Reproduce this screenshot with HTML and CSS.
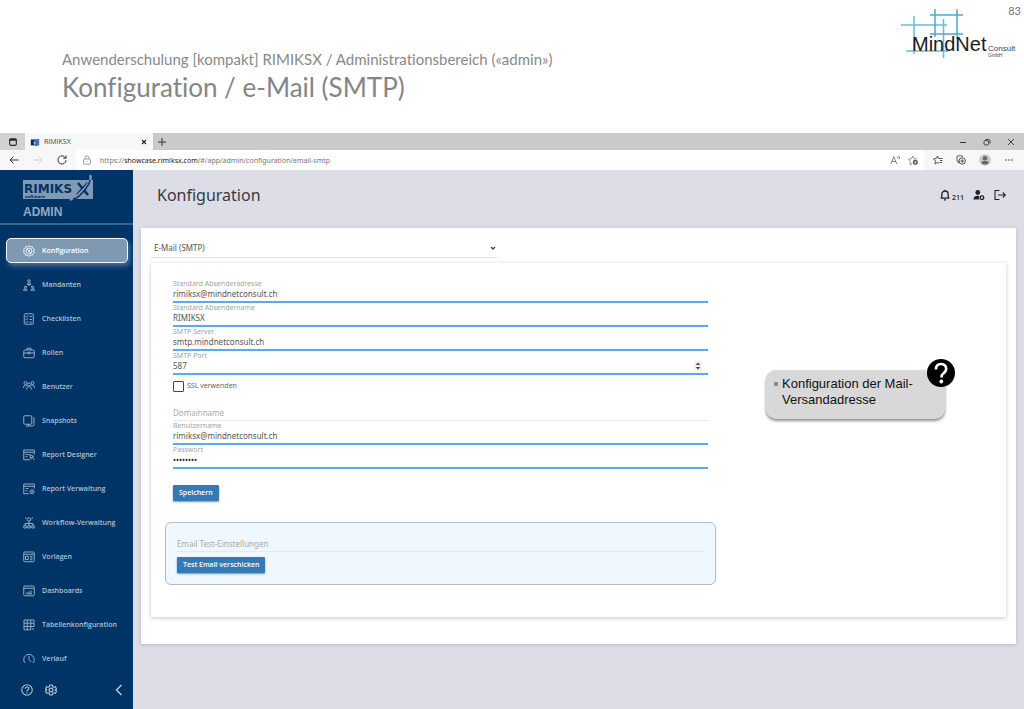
FILE: index.html
```
<!DOCTYPE html>
<html lang="de">
<head>
<meta charset="utf-8">
<meta name="viewport" content="width=device-width, initial-scale=1">
<title>Konfiguration / e-Mail (SMTP)</title>
<link rel="stylesheet" href="styles.css">
</head>
<body>
<header class="slide-head">
  <div class="slide-titles">
    <p class="slide-sub">Anwenderschulung [kompakt] RIMIKSX / Administrationsbereich («admin»)</p>
    <h1 class="slide-title">Konfiguration / e-Mail (SMTP)</h1>
  </div>
  <svg class="mindnet" viewBox="0 0 118 52" role="img" aria-label="MindNet Consult GmbH">
    <g stroke="#62bde4" stroke-width="1.5" fill="none">
      <path d="M1 18H47M6 44H48M14 9V47M43.500 12V51"/>
      <path stroke="#4da9cc" d="M30 8H63M30 27H63M35 2V30M57 2V32"/>
    </g>
    <text x="12" y="44" class="mn-name">MindNet</text>
    <text x="88" y="44" class="mn-consult">Consult</text>
    <text x="88" y="50" class="mn-gmbh">GmbH</text>
  </svg>
  <span class="page-no">83</span>
</header>

<section class="browser">
  <div class="tabbar">
    <button class="tab-menu" aria-label="Tabaktionen"><svg class="i10" viewBox="0 0 12 12"><rect x="2" y="2" width="8" height="8" rx="1.500" fill="none" stroke="#222" stroke-width="1.300"/><path d="M2 3.500h8" stroke="#222" stroke-width="2"/></svg></button>
    <div class="tab">
      <svg class="i10" viewBox="0 0 12 12"><rect x="1" y="3" width="6" height="7" fill="#16243f"/><path d="M5 3l6-1v8l-5 1z" fill="#3c6fd0"/><path d="M4 5l3 2-2 3z" fill="#a9c4ee"/></svg>
      <span class="tab-name">RIMIKSX</span>
      <button class="bare" aria-label="Tab schließen"><svg class="i8" viewBox="0 0 8 8"><path d="M2 2l4 4M6 2l-4 4" stroke="#222" stroke-width="1.100"/></svg></button>
    </div>
    <button class="bare new-tab" aria-label="Neuer Tab"><svg class="i10" viewBox="0 0 10 10"><path d="M5 1v8M1 5h8" stroke="#333"/></svg></button>
    <div class="window-btns">
      <button class="bare" aria-label="Minimieren"><svg class="i8" viewBox="0 0 8 8"><path d="M1 4.500h6" stroke="#333"/></svg></button>
      <button class="bare" aria-label="Wiederherstellen"><svg class="i8" viewBox="0 0 8 8"><path d="M2.500 1.500h3q1.500 0 1.500 1.500v2.500" fill="none" stroke="#333" stroke-width=".9"/><rect x="1" y="2.500" width="4.500" height="4.500" rx="1.500" fill="none" stroke="#333" stroke-width=".9"/></svg></button>
      <button class="bare" aria-label="Schließen"><svg class="i8" viewBox="0 0 8 8"><path d="M1 1l6 6M7 1l-6 6" stroke="#333" stroke-width=".9"/></svg></button>
    </div>
  </div>
  <div class="toolbar">
    <div class="nav-btns">
      <button class="bare" aria-label="Zurück"><svg class="i10" viewBox="0 0 10 10"><path d="M9.500 5H1M4.500 1.500L1 5l3.500 3.500" fill="none" stroke="#333"/></svg></button>
      <button class="bare" aria-label="Vorwärts"><svg class="i10" viewBox="0 0 10 10"><path d="M.5 5H9M5.500 1.500L9 5 5.500 8.500" fill="none" stroke="#d2d2d2"/></svg></button>
      <button class="bare" aria-label="Neu laden"><svg class="i10" viewBox="0 0 10 10"><path d="M8.600 3A4.100 4.100 0 1 0 9.100 5.200M9 .6V3.300H6.300" fill="none" stroke="#333"/></svg></button>
    </div>
    <div class="address">
      <svg class="i10" viewBox="0 0 10 10" fill="none" stroke="#888" stroke-width=".8"><rect x="1.500" y="4" width="7" height="5.200" rx="1"/><path d="M3.200 4V2.600a1.800 1.800 0 0 1 3.600 0V4M5 6v1"/></svg>
      <span class="url">https://<b>showcase.rimiksx.com</b>/#/app/admin/configuration/email-smtp</span>
      <svg class="i10" viewBox="0 0 10 10" fill="none" stroke="#666" stroke-width=".8"><path d="M.8 9L3.800 1.500 6.800 9M1.800 6.500h4M7 1.500q1 .8.800 2.200M8.500.6q1.300 1.200 1 3.400"/></svg>
      <svg class="i10" viewBox="0 0 10 10"><path d="M4 9L2 9.500l.4-3L.6 4.200l2.800-.5L4.800 1l1.300 2.600 2.800.4" fill="none" stroke="#777" stroke-width=".8"/><circle cx="7.300" cy="7.300" r="2.500" fill="#555"/><path d="M7.300 6v2.600M6 7.300h2.600" stroke="#fff" stroke-width=".6"/></svg>
    </div>
    <div class="tool-btns">
      <button class="bare" aria-label="Favoriten"><svg class="i10" viewBox="0 0 10 10" fill="none" stroke="#444" stroke-width=".9"><path d="M6 8.300L4.300 7.500 2 9l.4-3L.6 3.900l2.700-.4L4.500 1l1.200 2.500h3.800M7 5.500h2.500M6.500 7.500h2.500"/></svg></button>
      <button class="bare" aria-label="Sammlungen"><svg class="i10" viewBox="0 0 10 10" fill="none" stroke="#444" stroke-width=".9"><path d="M3 6.500H2.200Q1 6.500 1 5.300V2Q1 .8 2.200.8h3.300Q6.500.8 6.700 2M3 7.800L1.700 7"/><circle cx="6.200" cy="6" r="3.200"/><path d="M6.200 4.200v3.600M4.400 6H8"/></svg></button>
      <button class="bare" aria-label="Profil"><svg class="i12" viewBox="0 0 12 12"><circle cx="6" cy="6" r="5.800" fill="#c9c6c3"/><circle cx="6" cy="4.200" r="2.200" fill="#6a6663"/><path d="M2.500 9.500Q2.500 7 4 7h4q1.500 0 1.500 2.500Q6 11.500 2.500 9.500z" fill="#6a6663"/></svg></button>
      <button class="bare" aria-label="Mehr"><svg class="i10" viewBox="0 0 10 10" fill="#444"><circle cx="2" cy="5" r=".8"/><circle cx="5" cy="5" r=".8"/><circle cx="8" cy="5" r=".8"/></svg></button>
    </div>
  </div>

  <div class="app">
    <aside class="sidebar">
      <div class="brand">
        <svg class="brand-logo" viewBox="0 0 72 28" role="img" aria-label="RIMIKSX software">
          <rect x="0" y="6" width="70" height="19" fill="#809ab3"/>
          <text x="1" y="19" class="bl-name">RIMIKS</text>
          <text x="2" y="24" class="bl-sub">software</text>
          <path d="M55 9l10 12M65 9L54 21" stroke="#003366" stroke-width="2.600"/>
          <path d="M67 1q3 4-5 13T47 26" fill="none" stroke="#809ab3" stroke-width="2.400"/>
          <path d="M67 6q0 4-7 12T50 24.500" fill="none" stroke="#003366" stroke-width="1.500"/>
        </svg>
        <span class="brand-role">ADMIN</span>
      </div>
      <nav class="menu">
        <a class="item active" href="#konfiguration"><svg viewBox="0 0 24 24"><path d="M12 1.500l3 2 3.500-.3 1.200 3.300 3 1.800-.9 3.700.9 3.500-3 1.900-1.200 3.300-3.500-.2-3 2-3-2-3.500.2-1.200-3.300-3-1.900.9-3.500-.9-3.700 3-1.800L5.500 3.200 9 3.500z"/><circle cx="12" cy="12" r="6"/><path d="M8 8l8 8M10 14l5-4"/></svg>Konfiguration</a>
        <a class="item" href="#mandanten"><svg viewBox="0 0 24 24"><circle cx="12" cy="4" r="2.500"/><path d="M8.500 11q0-3.500 3.500-3.500t3.500 3.500zM12 11v3M8 14l-2 2M16 14l2 2"/><circle cx="4.500" cy="16.500" r="2"/><circle cx="19.500" cy="16.500" r="2"/><path d="M1 22.500q0-3 3.500-3t3.500 3zM16 22.500q0-3 3.500-3t3.500 3z"/></svg>Mandanten</a>
        <a class="item" href="#checklisten"><svg viewBox="0 0 24 24"><rect x="2.500" y="1.500" width="18" height="21" rx="2"/><path d="M5 7l2 1.500L10 5M5 12.500L7 14l3-3.500M5 18l2 1.500 3-3.500M13 7h5M13 13h5M13 18.500h5"/></svg>Checklisten</a>
        <a class="item" href="#rollen"><svg viewBox="0 0 24 24"><rect x="1.500" y="6" width="21" height="15.500" rx="2.500"/><path d="M8 6V2.500h8V6M1.500 12h8M14.500 12h8M9.500 10.500h5v3h-5z"/></svg>Rollen</a>
        <a class="item" href="#benutzer"><svg viewBox="0 0 24 24"><circle cx="5" cy="4" r="3"/><circle cx="12" cy="7" r="3"/><circle cx="19" cy="4" r="3"/><path d="M1 14q0-6 4-6 2 0 3 2M23 14q0-6-4-6-2 0-3 2M7 17q0-6 5-6t5 6"/></svg>Benutzer</a>
        <a class="item" href="#snapshots"><svg viewBox="0 0 24 24"><rect x="1.500" y="1.500" width="16" height="17" rx="2"/><path d="M6 22h13q3 0 3-3V6M11 18v4M20 6h2"/></svg>Snapshots</a>
        <a class="item" href="#report-designer"><svg viewBox="0 0 24 24"><path d="M22.500 11V2h-21v19.500H14M1.500 6.500h21M5 11h6M5 15.500h4M13 11l9 4-4 1.500L16 20zM18 16l5 6"/></svg>Report Designer</a>
        <a class="item" href="#report-verwaltung"><svg viewBox="0 0 24 24"><path d="M22.500 11V2h-21v19.500H12M1.500 6.500h21M5 11h6M5 15.500h4"/><circle cx="18" cy="17.500" r="4"/><circle cx="18" cy="17.500" r="1"/></svg>Report Verwaltung</a>
        <a class="item" href="#workflow"><svg viewBox="0 0 24 24"><circle cx="12" cy="5" r="3.500"/><path d="M12 8.500v9M4 17v-4h16v4M7 3L4 1M17 3l3-2M1.500 17.500h5v4.500h-5zM9.500 17.500h5v4.500h-5zM17.500 17.500h5v4.500h-5z"/></svg>Workflow-Verwaltung</a>
        <a class="item" href="#vorlagen"><svg viewBox="0 0 24 24"><rect x="1.500" y="2" width="21" height="19.500" rx="2"/><path d="M1.500 6.500h21M5 10.500h5.500V17H5zM14 10.500h5M14 14h5M14 17.500h5"/></svg>Vorlagen</a>
        <a class="item" href="#dashboards"><svg viewBox="0 0 24 24"><rect x="1.500" y="2" width="21" height="19.500" rx="2"/><path d="M1.500 6.500h21M6 17.500h12M8 17v-2.500M12 17v-4M16 17v-6"/></svg>Dashboards</a>
        <a class="item" href="#tabellen"><svg viewBox="0 0 24 24"><path d="M2 2h20v14M2 2v19.500h14M2 8.500h20M2 15h20M8.500 2v19.500M15.500 2v19.500M18 20h4"/></svg>Tabellenkonfiguration</a>
        <a class="item" href="#verlauf"><svg viewBox="0 0 24 24"><path d="M5 21a10.500 10.500 0 1 1 14 0M12 6v7l4 5"/></svg>Verlauf</a>
      </nav>
      <div class="side-foot">
        <button class="bare" aria-label="Hilfe"><svg class="i12" viewBox="0 0 24 24" fill="none" stroke="#b3c2d1" stroke-width="2.200"><circle cx="12" cy="12" r="10.500"/><path d="M8.500 9.500q0-3.500 3.500-3.500t3.500 3.200q0 2-3.500 4.300v1.500M12 16.500v2.300"/></svg></button>
        <button class="bare" aria-label="Einstellungen"><svg class="i12" viewBox="0 0 24 24" fill="none" stroke="#b3c2d1" stroke-width="2.400"><path d="M9.500 2h5l.8 3.200 2 1.200 3.200-1L23 9.700l-2.400 2.300 2.400 2.400-2.500 4.200-3.200-1-2 1.200-.8 3.200h-5l-.8-3.200-2-1.200-3.200 1L1 14.400 3.400 12 1 9.700l2.500-4.300 3.200 1 2-1.200z"/><circle cx="12" cy="12" r="3.800"/></svg></button>
        <button class="bare collapse" aria-label="Einklappen"><svg class="i12" viewBox="0 0 12 12"><path d="M8.500 1L3.500 6l5 5" fill="none" stroke="#c5d0dc" stroke-width="1.400"/></svg></button>
      </div>
    </aside>

    <main class="main">
      <header class="main-head">
        <h2 class="main-title">Konfiguration</h2>
        <div class="actions">
          <button class="bare bell" aria-label="Benachrichtigungen 211"><svg class="i12" viewBox="0 0 12 12" fill="none" stroke="#222" stroke-width="1.300"><path d="M1.500 9.200h9M2.800 9V5.200a3.200 3.200 0 0 1 6.400 0V9M6 2V.8M5 10.800h2"/></svg><span class="count">211</span></button>
          <button class="bare" aria-label="Benutzereinstellungen"><svg class="i12" viewBox="0 0 12 12"><circle cx="4.800" cy="3.500" r="2.400" fill="#222"/><path d="M.5 10.500Q.5 6.800 4.800 6.800q1 0 1.700.3Q5.500 8.500 6.300 10.500z" fill="#222"/><circle cx="9" cy="8.700" r="1.800" fill="none" stroke="#222" stroke-width="1.300"/></svg></button>
          <button class="bare" aria-label="Abmelden"><svg class="i12" viewBox="0 0 12 12" fill="none" stroke="#222" stroke-width="1.100"><path d="M5.500 1.500H1v9h4.500M4 6h7.300M8.800 3.500L11.300 6 8.800 8.500"/></svg></button>
        </div>
      </header>

      <div class="panel">
        <div class="picker">
          <select class="picker-select" aria-label="Konfigurationsbereich"><option>E-Mail (SMTP)</option></select>
          <svg class="picker-arrow" viewBox="0 0 8 8"><path d="M2 3L4 5l2-2" fill="none" stroke="#444" stroke-width="1.300"/></svg>
        </div>
        <div class="card">
          <form class="form">
            <div class="fields">
              <div class="field"><label for="from">Standard Absenderadresse</label><input id="from" type="text" value="rimiksx@mindnetconsult.ch"></div>
              <div class="field"><label for="name">Standard Absendername</label><input id="name" type="text" value="RIMIKSX"></div>
              <div class="field"><label for="server">SMTP Server</label><input id="server" type="text" value="smtp.mindnetconsult.ch"></div>
              <div class="field"><label for="port">SMTP Port</label><input id="port" type="number" value="587"><svg class="spinner" viewBox="0 0 8 10"><rect width="8" height="10" fill="#f0f0f0"/><path d="M1.800 4L4 1.500 6.200 4zM1.800 6L4 8.500 6.200 6z" fill="#444"/></svg></div>
              <div class="check"><input id="ssl" type="checkbox"><label for="ssl">SSL verwenden</label></div>
              <input class="plain" type="text" placeholder="Domainname" aria-label="Domainname">
              <div class="field"><label for="user">Benutzername</label><input id="user" type="text" value="rimiksx@mindnetconsult.ch"></div>
              <div class="field"><label for="pass">Passwort</label><input id="pass" type="password" value="password"></div>
              <button class="btn save" type="button">Speichern</button>
            </div>
            <div class="test">
              <input class="plain" type="text" placeholder="Email Test-Einstellungen" aria-label="Email Test-Einstellungen">
              <button class="btn" type="button">Test Email verschicken</button>
            </div>
          </form>
          <div class="callout">
            <ul class="callout-list"><li>Konfiguration der Mail-Versandadresse</li></ul>
            <svg class="callout-badge" viewBox="0 0 28 28" role="img" aria-label="Hilfe"><circle cx="14" cy="14" r="14" fill="#000"/><path d="M9 10.500Q9 5 14 5t5.200 4.800q0 2.700-2.700 4.500-2 1.500-2 4.200" fill="none" stroke="#fff" stroke-width="2.600"/><circle cx="14.300" cy="22.500" r="1.900" fill="#fff"/></svg>
          </div>
        </div>
      </div>
    </main>
  </div>
</section>
</body>
</html>
```
FILE: styles.css
```
* { box-sizing: border-box; }

body {
  margin: 0;
  height: 100vh;
  display: flex;
  flex-direction: column;
  background: #fff;
  color: #444;
  font-family: "Noto Sans", "Open Sans", sans-serif;
  font-size: 8px;
  overflow: hidden;
}

h1, h2, p, ul { margin: 0; padding: 0; font-weight: 400; }
svg { display: block; flex: none; }

.bare {
  display: flex;
  align-items: center;
  padding: 0;
  border: 0;
  background: none;
  font: inherit;
  color: inherit;
}
.i8 { width: 8px; height: 8px; }
.i10 { width: 10px; height: 10px; }
.i12 { width: 12px; height: 12px; }

/* slide header */
.slide-head {
  display: flex;
  flex: none;
  height: 133px;
  padding-left: 62px;
  font-family: Lato, sans-serif;
  font-variant-ligatures: none;
}
.slide-titles { flex: 1; padding-top: 49px; color: #898989; white-space: nowrap; }
.slide-sub { font-size: 15px; line-height: 20px; }
.slide-title { font-size: 26px; line-height: 36px; color: #858585; }
.mindnet { width: 118px; height: 52px; margin-top: 7px; }
.mn-name { font: 20px "Liberation Sans", sans-serif; fill: #1c1c1c; }
.mn-consult { font: 8px "Liberation Sans", sans-serif; fill: #444; }
.mn-gmbh { font: 5px "Liberation Sans", sans-serif; fill: #444; }
.page-no {
  width: 3px;
  margin-right: 3px;
  padding-top: 4px;
  display: flex;
  justify-content: flex-end;
  font-size: 11px;
  line-height: 14px;
  color: #777;
}

/* browser frame */
.browser { flex: 1; min-height: 0; display: flex; flex-direction: column; }
.tabbar { display: flex; flex: none; height: 17px; background: #cacaca; }
.tab-menu {
  width: 25px;
  display: flex;
  align-items: center;
  justify-content: center;
  padding: 0;
  border: 0;
  background: #d2d2d2;
}
.tab {
  width: 128px;
  display: flex;
  align-items: center;
  gap: 4px;
  padding: 0 5px;
  background: #f7f7f7;
}
.tab-name { flex: 1; font: 7px "Open Sans", sans-serif; }
.new-tab { margin-left: 4px; }
.window-btns { display: flex; gap: 16px; margin-left: auto; padding-right: 9px; }
.toolbar { display: flex; flex: none; height: 20px; background: #f7f7f7; }
.nav-btns { display: flex; gap: 14px; padding: 0 9px; }
.address {
  flex: 1;
  display: flex;
  align-items: center;
  gap: 8px;
  padding: 0 6px;
  background: #fff;
}
.url { flex: 1; font-size: 7px; color: #777; }
.url b { font-weight: 400; color: #222; }
.tool-btns { display: flex; gap: 13px; padding: 0 10px 0 9px; }

/* application */
.app { flex: 1; min-height: 0; display: flex; background: #dddde8; }
.sidebar {
  width: 133px;
  flex: none;
  display: flex;
  flex-direction: column;
  background: #003366;
}
.brand {
  flex: none;
  height: 55px;
  padding: 4px 0 0 23px;
  border-bottom: 2px solid #33658c;
}
.brand-logo { width: 72px; height: 28px; }
.bl-name { font: bold 12px "DejaVu Sans", sans-serif; fill: #003366; }
.bl-sub { font: bold 4px "DejaVu Sans", sans-serif; fill: #003366; }
.brand-role {
  display: block;
  font: bold 12px/20px "Liberation Sans", sans-serif;
  color: #92a9bf;
}
.menu {
  flex: 1;
  min-height: 0;
  overflow: hidden;
  display: flex;
  flex-direction: column;
  gap: 9px;
  padding: 13px 5px 0 6px;
}
.item {
  flex: none;
  display: flex;
  align-items: center;
  gap: 7px;
  height: 25px;
  padding-left: 16px;
  border: 1px solid transparent;
  border-radius: 5px;
  font: 600 7px "Open Sans", sans-serif;
  color: #b0c1d2;
  text-decoration: none;
}
.item svg { width: 12px; height: 12px; fill: none; stroke: #93abc3; stroke-width: 2; }
.item.active {
  background: #7f99b2;
  border-color: #f4f7fa;
  color: #fff;
  box-shadow: 2px 3px 5px #4d7093;
}
.item.active svg { stroke: #e8eef4; }
.side-foot {
  flex: none;
  display: flex;
  gap: 12px;
  height: 46px;
  padding: 8px 8px 0 21px;
}
.collapse { margin-left: auto; }

.main { flex: 1; min-width: 0; padding: 0 8px; }
.main-head {
  display: flex;
  align-items: center;
  justify-content: space-between;
  height: 58px;
  padding: 0 10px 8px 16px;
}
.main-title { font-size: 16px; line-height: 24px; color: #3a3a3a; }
.actions { display: flex; align-items: center; gap: 9px; }
.count { align-self: flex-end; font: 600 7px/8px "Noto Sans", sans-serif; color: #333; }
.bell { height: 14px; gap: 1px; }

.panel {
  padding: 10px 10px 27px;
  background: #fff;
  box-shadow: 0 1px 4px #b9b9c6;
}
.picker {
  display: flex;
  align-items: center;
  width: 40.5%;
  height: 20px;
  margin-bottom: 5px;
  padding: 0 0 0 3px;
  border-bottom: 1px solid #e0e0e0;
}
.picker-select {
  flex: 1;
  padding: 0;
  border: 0;
  background: none;
  appearance: none;
  font: 8px/12px "Noto Sans", sans-serif;
  color: #555;
}
.picker-arrow { width: 8px; height: 8px; }
.card {
  position: relative;
  padding: 16px 14px 32px;
  background: #fff;
  box-shadow: 0 1px 4px #c4c4c4;
}
.form { width: 66.66%; }
.fields { display: flex; flex-direction: column; padding: 0 8px; }
.field {
  position: relative;
  display: flex;
  flex-direction: column;
  height: 24px;
  border-bottom: 2px solid #58aaf3;
}
.field label { font-size: 7px; line-height: 10px; color: #a3a3a3; }
.field input, .plain {
  width: 100%;
  padding: 0;
  border: 0;
  outline: 0;
  background: none;
  font: 8px/10px "Noto Sans", sans-serif;
  color: #555;
}
.field input { height: 10px; appearance: textfield; }
.field input[type="password"] { color: #222; }
.spinner { position: absolute; right: 6px; bottom: 2px; width: 8px; height: 10px; }
.check { display: flex; align-items: center; gap: 3px; height: 22px; }
.check input {
  appearance: none;
  width: 11px;
  height: 11px;
  margin: 0;
  border: 1px solid #444;
  border-radius: 1px;
  background: #fff;
}
.check label { font-size: 7px; line-height: 10px; color: #666; }
.plain { height: 17px; border-bottom: 1px solid #e6e9ed; }
.fields .plain { margin-top: 7px; }
.plain::placeholder { color: #aaa; opacity: 1; }
.btn {
  height: 16px;
  padding: 0 6px;
  border: 0;
  border-radius: 1px;
  background: #337ab7;
  box-shadow: 0 1px 2px #8a8f95;
  font: 600 7px/16px "Open Sans", sans-serif;
  color: #fff;
}
.save { align-self: flex-start; margin-top: 16px; }
.test {
  margin-top: 21px;
  padding: 12px 11px 11px;
  border: 1px solid #b4bbc1;
  border-radius: 6px;
  background: #eff7ff;
}
.test .plain { display: block; margin-bottom: 5px; }

/* annotation floating above the page */
.callout {
  position: absolute;
  top: 107px;
  right: 61px;
  width: 179px;
  height: 49px;
  padding: 6px 8px;
  border-radius: 10px;
  background: #d8d8d8;
  box-shadow: 0 2px 3px #8e8e8e;
}
.callout-list {
  list-style: none;
  font: 13px/16px "Liberation Sans", sans-serif;
  color: #111;
}
.callout-list li { display: flex; gap: 4px; padding-right: 20px; }
.callout-list li::before {
  content: "";
  flex: none;
  width: 4px;
  height: 4px;
  margin-top: 6px;
  background: #8a8a8a;
}
.callout-badge { position: absolute; top: -11px; right: -10px; width: 28px; height: 28px; }
```
